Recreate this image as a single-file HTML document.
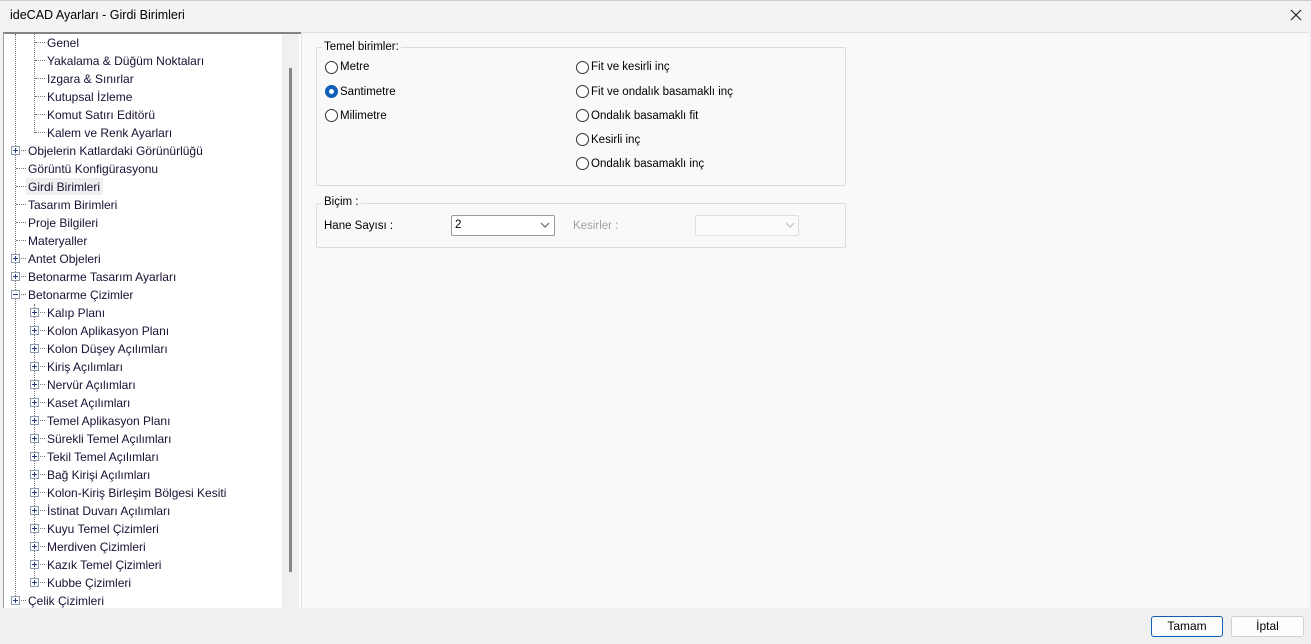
<!DOCTYPE html>
<html><head><meta charset="utf-8"><style>
*{margin:0;padding:0;box-sizing:border-box}
body{width:1311px;height:644px;background:#f0f0f0;font-family:"Liberation Sans",sans-serif;font-size:12px;color:#000;position:relative;overflow:hidden}
.a{position:absolute;white-space:nowrap}
.t{color:#1b0f33;line-height:18px;height:18px}
.box{position:absolute;width:9px;height:9px;border:1px solid #8d9bb0;background:#fff}
.box:before{content:"";position:absolute;left:1px;top:3px;width:5px;height:1px;background:#2a3a80}
.box.p:after{content:"";position:absolute;left:3px;top:1px;width:1px;height:5px;background:#2a3a80}
.h{position:absolute;height:1px;border-top:1px dotted #777}
.v{position:absolute;width:1px;border-left:1px dotted #777}
.rad{position:absolute;width:13px;height:13px;border:1px solid #333;border-radius:50%;background:#fff}
.rad.on{background:#0f5fb8;border-color:#0f5fb8}
.rad.on:after{content:"";position:absolute;left:3px;top:3px;width:5px;height:5px;border-radius:50%;background:#fff}
.lab{position:absolute;font-size:11.5px;color:#000}
fieldset{position:absolute;border:1px solid #dcdcdc;border-radius:2px}
</style></head><body>
<div class="a" style="left:0;top:0;width:1311px;height:32px;background:#f3f3f3;border-top:1px solid #ccc"></div>
<div class="a" style="left:10px;top:8px;font-size:12.5px">ideCAD Ayarları - Girdi Birimleri</div>
<svg class="a" style="left:1289px;top:8px" width="14" height="14"><path d="M2 2L12 12M12 2L2 12" stroke="#222" stroke-width="1.2"/></svg>
<div class="a" style="left:3px;top:32px;width:298px;height:576px;background:#fff;border-top:2px solid #858585;border-left:1px solid #a0a0a0"></div>
<div class="a" style="left:282px;top:34px;width:17px;height:574px;background:#f0f0f0"></div>
<div class="a" style="left:289px;top:68px;width:3px;height:504px;background:#858585"></div>
<div class="a" style="left:301px;top:32px;width:1008px;height:576px;background:#f9f9f9;border-left:1px solid #e0e0e0;border-top:1px solid #e0e0e0"></div>
<div id="tree"></div>
<script>
var items=[[2,0,"Genel"],[2,0,"Yakalama & Düğüm Noktaları"],[2,0,"Izgara & Sınırlar"],[2,0,"Kutupsal İzleme"],[2,0,"Komut Satırı Editörü"],[2,0,"Kalem ve Renk Ayarları"],[1,1,"Objelerin Katlardaki Görünürlüğü"],[1,0,"Görüntü Konfigürasyonu"],[1,0,"Girdi Birimleri"],[1,0,"Tasarım Birimleri"],[1,0,"Proje Bilgileri"],[1,0,"Materyaller"],[1,1,"Antet Objeleri"],[1,1,"Betonarme Tasarım Ayarları"],[1,2,"Betonarme Çizimler"],
[2,1,"Kalıp Planı"],[2,1,"Kolon Aplikasyon Planı"],[2,1,"Kolon Düşey Açılımları"],[2,1,"Kiriş Açılımları"],[2,1,"Nervür Açılımları"],[2,1,"Kaset Açılımları"],[2,1,"Temel Aplikasyon Planı"],[2,1,"Sürekli Temel Açılımları"],[2,1,"Tekil Temel Açılımları"],[2,1,"Bağ Kirişi Açılımları"],[2,1,"Kolon-Kiriş Birleşim Bölgesi Kesiti"],[2,1,"İstinat Duvarı Açılımları"],[2,1,"Kuyu Temel Çizimleri"],[2,1,"Merdiven Çizimleri"],[2,1,"Kazık Temel Çizimleri"],[2,1,"Kubbe Çizimleri"],[1,1,"Çelik Çizimleri"]];
var h='';
h+='<div class="v" style="left:15px;top:34px;height:566px"></div>';
h+='<div class="v" style="left:34px;top:34px;height:99px"></div>';
h+='<div class="v" style="left:34px;top:304px;height:278px"></div>';
items.forEach(function(it,i){var y=33+i*18,cy=y+9,lx=it[0]==1?15:34,tx=it[0]==1?28:47;
h+='<div class="h" style="left:'+(lx+1)+'px;top:'+cy+'px;width:'+(tx-lx-3)+'px"></div>';
if(it[1])h+='<div class="box'+(it[1]==1?' p':'')+'" style="left:'+(lx-4)+'px;top:'+(cy-4)+'px"></div>';
if(i==8)h+='<div class="a" style="left:26px;top:'+(y+1)+'px;width:77px;height:17px;background:#f0f0f0"></div>';
h+='<div class="a t" style="left:'+tx+'px;top:'+(y+1)+'px">'+it[2]+'</div>';});
document.getElementById('tree').innerHTML=h;
</script>
<fieldset style="left:316px;top:47px;width:530px;height:139px"></fieldset>
<div class="a" style="left:322px;top:41px;background:#f9f9f9;padding:0 2px;font-size:11.5px">Temel birimler:</div>
<div class="rad" style="left:325px;top:61px"></div><div class="lab" style="left:340px;top:61px">Metre</div>
<div class="rad on" style="left:325px;top:85px"></div><div class="lab" style="left:340px;top:86px">Santimetre</div>
<div class="rad" style="left:325px;top:109px"></div><div class="lab" style="left:340px;top:110px">Milimetre</div>
<div class="rad" style="left:576px;top:61px"></div><div class="lab" style="left:591px;top:61px">Fit ve kesirli inç</div>
<div class="rad" style="left:576px;top:85px"></div><div class="lab" style="left:591px;top:86px">Fit ve ondalık basamaklı inç</div>
<div class="rad" style="left:576px;top:109px"></div><div class="lab" style="left:591px;top:110px">Ondalık basamaklı fit</div>
<div class="rad" style="left:576px;top:133px"></div><div class="lab" style="left:591px;top:134px">Kesirli inç</div>
<div class="rad" style="left:576px;top:157px"></div><div class="lab" style="left:591px;top:158px">Ondalık basamaklı inç</div>
<fieldset style="left:316px;top:203px;width:530px;height:45px"></fieldset>
<div class="a" style="left:322px;top:196px;background:#f9f9f9;padding:0 2px;font-size:11.5px">Biçim :</div>
<div class="lab" style="left:324px;top:220px">Hane Sayısı :</div>
<div class="a" style="left:451px;top:215px;width:104px;height:21px;background:#fff;border:1px solid #9a9a9a;border-radius:2px"></div>
<div class="lab" style="left:455px;top:219px">2</div>
<svg class="a" style="left:540px;top:222px" width="10" height="6"><path d="M1 1L5 5L9 1" stroke="#555" fill="none"/></svg>
<div class="lab" style="left:573px;top:220px;color:#a0a0a0">Kesirler :</div>
<div class="a" style="left:695px;top:215px;width:104px;height:21px;background:#fbfbfb;border:1px solid #e0e0e0;border-radius:2px"></div>
<svg class="a" style="left:785px;top:222px" width="10" height="6"><path d="M1 1L5 5L9 1" stroke="#bbb" fill="none"/></svg>
<div class="a" style="left:1151px;top:616px;width:72px;height:21px;background:#fdfdfd;border:1px solid #0f5fb8;border-radius:3px;text-align:center;line-height:19px">Tamam</div>
<div class="a" style="left:1231px;top:616px;width:73px;height:21px;background:#fdfdfd;border:1px solid #d0d0d0;border-radius:3px;text-align:center;line-height:19px">İptal</div>
</body></html>
